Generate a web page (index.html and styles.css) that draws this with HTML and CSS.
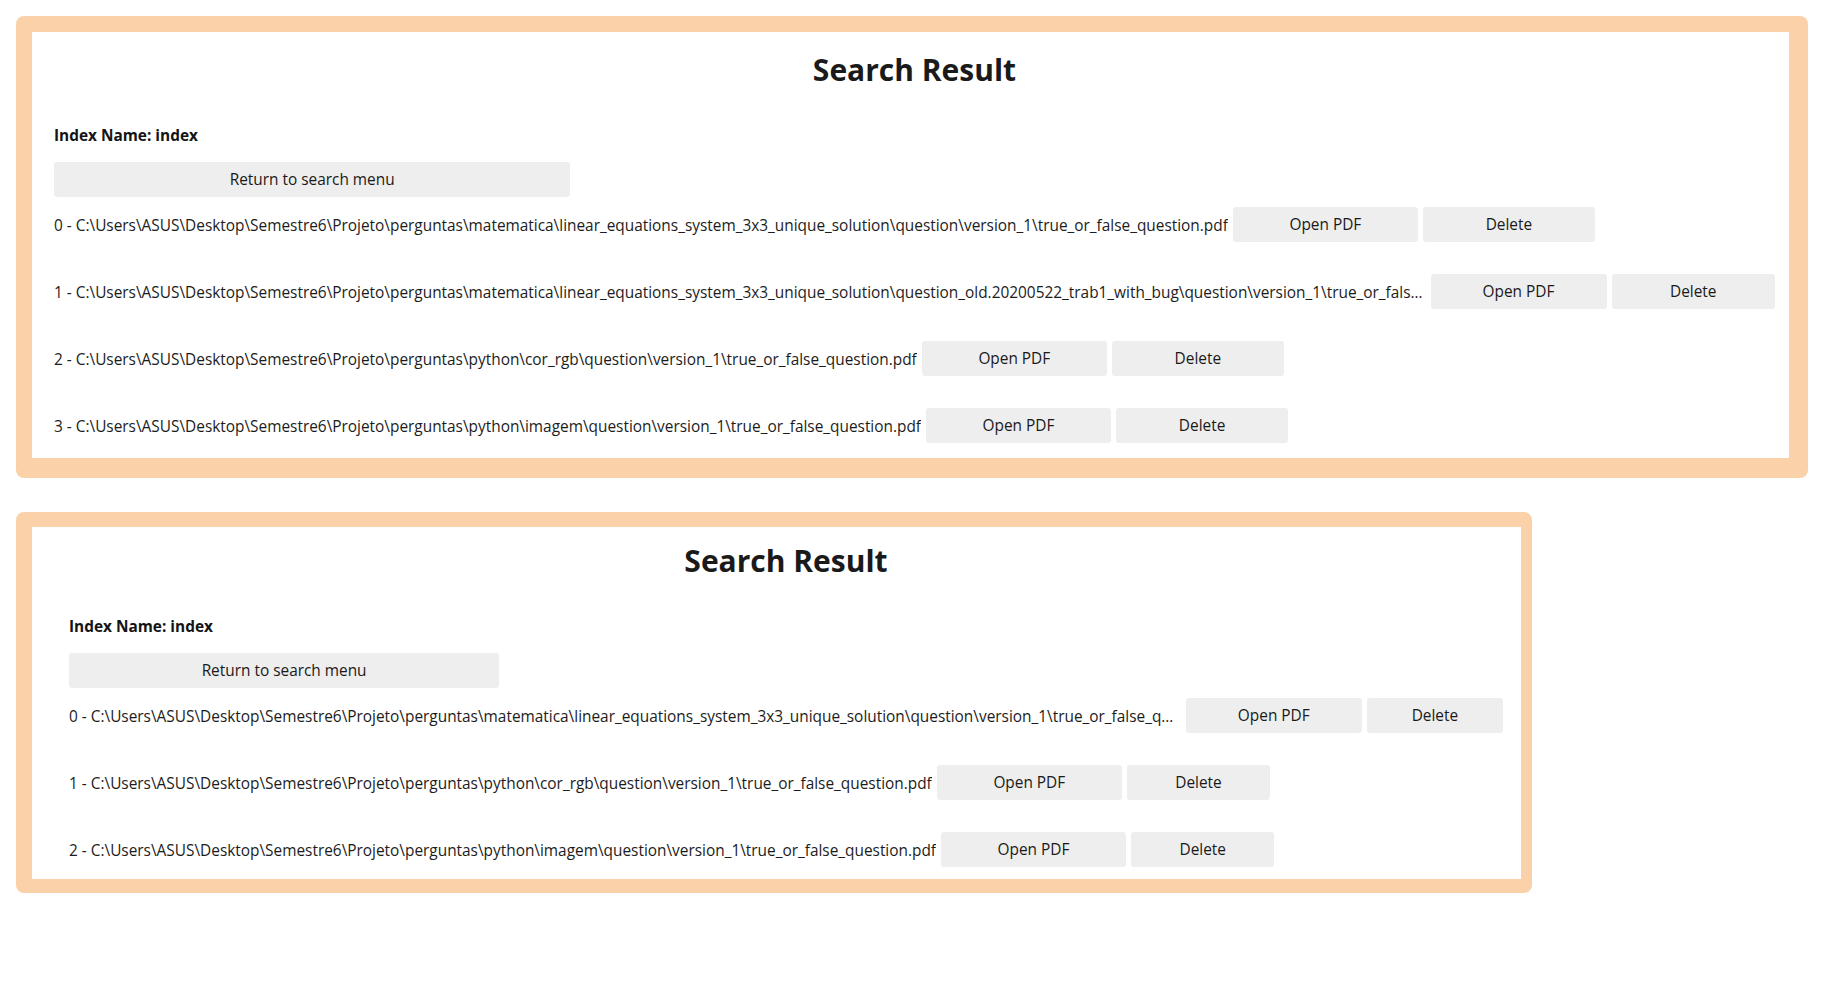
FILE: index.html
```html
<!DOCTYPE html>
<html lang="en">
<head>
<meta charset="utf-8">
<title>Search Result</title>
<link rel="stylesheet" href="styles.css">
</head>
<body>
<main class="page">
  <section class="panel panel--wide">
    <h1 class="title">Search Result</h1>
    <p class="index-name">Index Name: index</p>
    <button class="btn btn-return">Return to search menu</button>
    <ul class="results">
      <li class="result">
        <span class="path">0 - C:\Users\ASUS\Desktop\Semestre6\Projeto\perguntas\matematica\linear_equations_system_3x3_unique_solution\question\version_1\true_or_false_question.pdf</span>
        <button class="btn btn-open">Open PDF</button>
        <button class="btn btn-delete">Delete</button>
      </li>
      <li class="result result--clipped">
        <span class="path">1 - C:\Users\ASUS\Desktop\Semestre6\Projeto\perguntas\matematica\linear_equations_system_3x3_unique_solution\question_old.20200522_trab1_with_bug\question\version_1\true_or_false_question.pdf</span>
        <button class="btn btn-open">Open PDF</button>
        <button class="btn btn-delete">Delete</button>
      </li>
      <li class="result">
        <span class="path">2 - C:\Users\ASUS\Desktop\Semestre6\Projeto\perguntas\python\cor_rgb\question\version_1\true_or_false_question.pdf</span>
        <button class="btn btn-open">Open PDF</button>
        <button class="btn btn-delete">Delete</button>
      </li>
      <li class="result">
        <span class="path">3 - C:\Users\ASUS\Desktop\Semestre6\Projeto\perguntas\python\imagem\question\version_1\true_or_false_question.pdf</span>
        <button class="btn btn-open">Open PDF</button>
        <button class="btn btn-delete">Delete</button>
      </li>
    </ul>
  </section>

  <section class="panel panel--narrow">
    <h1 class="title">Search Result</h1>
    <p class="index-name">Index Name: index</p>
    <button class="btn btn-return">Return to search menu</button>
    <ul class="results">
      <li class="result result--clipped">
        <span class="path">0 - C:\Users\ASUS\Desktop\Semestre6\Projeto\perguntas\matematica\linear_equations_system_3x3_unique_solution\question\version_1\true_or_false_question.pdf</span>
        <button class="btn btn-open">Open PDF</button>
        <button class="btn btn-delete">Delete</button>
      </li>
      <li class="result">
        <span class="path">1 - C:\Users\ASUS\Desktop\Semestre6\Projeto\perguntas\python\cor_rgb\question\version_1\true_or_false_question.pdf</span>
        <button class="btn btn-open">Open PDF</button>
        <button class="btn btn-delete">Delete</button>
      </li>
      <li class="result">
        <span class="path">2 - C:\Users\ASUS\Desktop\Semestre6\Projeto\perguntas\python\imagem\question\version_1\true_or_false_question.pdf</span>
        <button class="btn btn-open">Open PDF</button>
        <button class="btn btn-delete">Delete</button>
      </li>
    </ul>
  </section>
</main>
</body>
</html>
```

FILE: styles.css
```css
* {
  box-sizing: border-box;
}

html, body {
  margin: 0;
  background: #ffffff;
}

body {
  font-family: "Open Sans", "Noto Sans", sans-serif;
  color: #1c1c1c;
}

.page {
  padding: 16px;
  display: flex;
  flex-direction: column;
  align-items: flex-start;
  gap: 34px;
}

.panel {
  display: flex;
  flex-direction: column;
  border-style: solid;
  border-color: #fad1a8;
  border-radius: 8px;
  background: #ffffff;
}

.panel--wide {
  width: 1792px;
  border-width: 16px 19px 20px 16px;
  padding: 18px 14px 15px 22px;
}

.panel--narrow {
  width: 1516px;
  border-width: 15px 11px 14px 16px;
  padding: 14px 18px 12px 37px;
}

.title {
  margin: 0;
  font-size: 30px;
  line-height: 40px;
  font-weight: 700;
  text-align: center;
  color: #1a1a1a;
}

.index-name {
  margin: 36px 0 0;
  font-size: 15.4px;
  line-height: 20px;
  font-weight: 700;
  color: #141414;
}

.btn {
  font-family: inherit;
  font-size: 15.4px;
  color: #1a1a1a;
  background: #eeeeee;
  border: none;
  border-radius: 3px;
  height: 35px;
  padding: 0;
  cursor: pointer;
}

.btn-return {
  margin-top: 16px;
  width: 30%;
}

.results {
  list-style: none;
  margin: 10px 0 0;
  padding: 0;
  display: flex;
  flex-direction: column;
  gap: 32px;
}

.result {
  display: flex;
  align-items: center;
  gap: 5px;
  height: 35px;
}

.path {
  flex: 0 1 auto;
  min-width: 0;
  white-space: nowrap;
  overflow: hidden;
  text-overflow: ellipsis;
  font-size: 15.4px;
  line-height: 20px;
  padding-top: 2px;
}

.btn-open {
  flex: 0 0 185px;
}

.btn-delete {
  flex: 0 0 10%;
}

.result--clipped .btn-open {
  flex-basis: 176px;
}

.result--clipped .btn-delete {
  flex-basis: 9.5%;
}
```
